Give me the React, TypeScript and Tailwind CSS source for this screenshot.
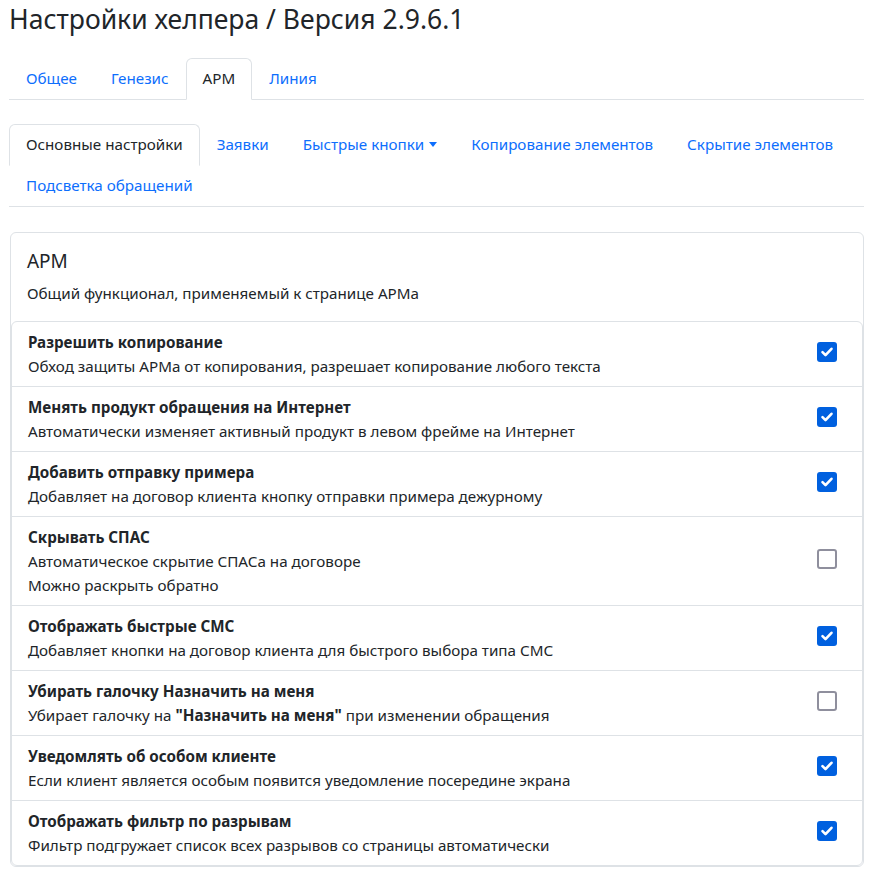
import React from 'react'

const TOP_TABS = ['Общее', 'Генезис', 'АРМ', 'Линия']
const SUB_TABS = ['Основные настройки', 'Заявки', 'Быстрые кнопки', 'Копирование элементов', 'Скрытие элементов', 'Подсветка обращений']

type Row = { title: string; desc: React.ReactNode[]; checked: boolean }

const ROWS: Row[] = [
  { title: 'Разрешить копирование', desc: ['Обход защиты АРМа от копирования, разрешает копирование любого текста'], checked: true },
  { title: 'Менять продукт обращения на Интернет', desc: ['Автоматически изменяет активный продукт в левом фрейме на Интернет'], checked: true },
  { title: 'Добавить отправку примера', desc: ['Добавляет на договор клиента кнопку отправки примера дежурному'], checked: true },
  { title: 'Скрывать СПАС', desc: ['Автоматическое скрытие СПАСа на договоре', 'Можно раскрыть обратно'], checked: false },
  { title: 'Отображать быстрые СМС', desc: ['Добавляет кнопки на договор клиента для быстрого выбора типа СМС'], checked: true },
  {
    title: 'Убирать галочку Назначить на меня',
    desc: [
      <>
        Убирает галочку на <b className="font-bold">"Назначить на меня"</b> при изменении обращения
      </>,
    ],
    checked: false,
  },
  { title: 'Уведомлять об особом клиенте', desc: ['Если клиент является особым появится уведомление посередине экрана'], checked: true },
  { title: 'Отображать фильтр по разрывам', desc: ['Фильтр подгружает список всех разрывов со страницы автоматически'], checked: true },
]

function Check({ checked }: { checked: boolean }) {
  if (checked) {
    return (
      <div className="w-5 h-5 rounded-[3px] bg-[#0060df] flex items-center justify-center shrink-0">
        <svg viewBox="0 0 20 20" className="w-5 h-5" aria-hidden="true">
          <path d="M5.5 10.2l3 3 6-6.4" fill="none" stroke="#fff" strokeWidth="2.6" strokeLinecap="round" strokeLinejoin="round" />
        </svg>
      </div>
    )
  }
  return <div className="w-5 h-5 rounded-[3px] border-2 border-[#8f8f9d] bg-white shrink-0" />
}

export default function App() {
  return (
    <div className="min-h-screen bg-white text-[#212529] pl-[9px] pr-[12px] text-[15.2px] leading-6" style={{ fontFamily: '"Noto Sans", "Open Sans", sans-serif' }}>
      {/* Title */}
      <h3 className="text-[26.5px] leading-[38px] font-normal">Настройки хелпера / Версия 2.9.6.1</h3>

      {/* Top tabs */}
      <div className="mt-[20px] flex border-b border-[#dee2e6]">
        {TOP_TABS.map(t => {
          const active = t === 'АРМ'
          return (
            <div
              key={t}
              className={
                active
                  ? 'px-4 py-2 leading-[23px] -mb-px border border-[#dee2e6] border-b-white rounded-t-md bg-white text-[#212529]'
                  : 'px-4 py-2 leading-[23px] border border-transparent text-[#0d6efd]'
              }
            >
              {t}
            </div>
          )
        })}
      </div>

      {/* Sub tabs */}
      <div className="mt-[24px] flex flex-wrap border-b border-[#dee2e6]">
        {SUB_TABS.map(t => {
          const active = t === 'Основные настройки'
          return (
            <div
              key={t}
              className={
                active
                  ? 'px-4 py-2 leading-[23px] -mb-px border border-[#dee2e6] border-b-white rounded-t-md bg-white text-[#212529]'
                  : 'px-4 py-2 leading-[23px] border border-transparent text-[#0d6efd] flex items-center'
              }
            >
              {t}
              {t === 'Быстрые кнопки' && (
                <span className="ml-[5px] inline-block w-0 h-0 border-x-[4px] border-x-transparent border-t-[5px] border-t-[#0d6efd]" />
              )}
            </div>
          )
        })}
      </div>

      {/* Card */}
      <div className="mt-[25px] ml-px border border-[#dee2e6] rounded-md bg-white">
        <div className="p-4">
          <h5 className="text-[19px] leading-6 font-normal mb-2">АРМ</h5>
          <p>Общий функционал, применяемый к странице АРМа</p>
        </div>
        <div className="border border-[#dee2e6] rounded-md">
          {ROWS.map((r, i) => (
            <div
              key={r.title}
              className={`flex items-center justify-between px-4 py-2 ${i < ROWS.length - 1 ? 'border-b border-[#dee2e6]' : ''}`}
            >
              <div>
                <div className="font-bold">{r.title}</div>
                {r.desc.map((d, j) => (
                  <div key={j}>{d}</div>
                ))}
              </div>
              <div className="mr-[9px] mb-[4px]">
                <Check checked={r.checked} />
              </div>
            </div>
          ))}
        </div>
      </div>
    </div>
  )
}
